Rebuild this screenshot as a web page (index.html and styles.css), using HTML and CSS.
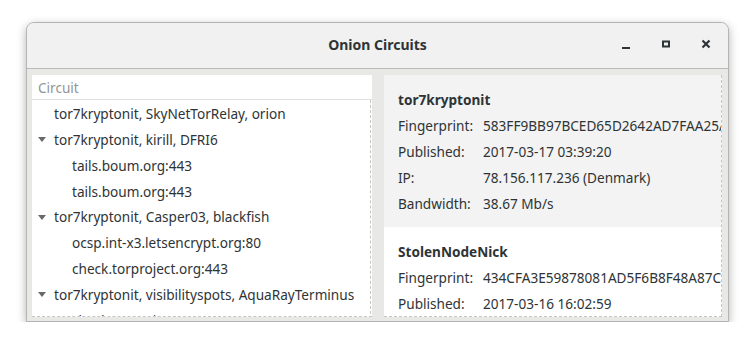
FILE: index.html
```html
<!DOCTYPE html>
<html lang="en">
<head>
  <meta charset="UTF-8">
  <title>Onion Circuits</title>
  <link rel="stylesheet" href="styles.css">
</head>
<body>
  <div class="janela">
    <header class="titulo">
      <span></span>
      <h1>Onion Circuits</h1>
      <div class="botoes">
        <button class="btn" title="Minimizar">
          <svg width="16" height="16" viewBox="0 0 16 16"><rect x="4" y="10" width="8" height="2" fill="#2e3436"/></svg>
        </button>
        <button class="btn" title="Maximizar">
          <svg width="16" height="16" viewBox="0 0 16 16"><rect x="5" y="4.5" width="6" height="5" fill="none" stroke="#2e3436" stroke-width="2"/></svg>
        </button>
        <button class="btn" title="Fechar">
          <svg width="16" height="16" viewBox="0 0 16 16"><path d="M4.5 3.5 L11.5 10.5 M11.5 3.5 L4.5 10.5" stroke="#2e3436" stroke-width="2.2" fill="none"/></svg>
        </button>
      </div>
    </header>

    <div class="conteudo">
      <section class="painel circuitos">
        <div class="cabecalho">Circuit</div>
        <ul class="arvore">
          <li class="linha">tor7kryptonit, SkyNetTorRelay, orion</li>
          <li class="linha aberto"><span class="seta"></span>tor7kryptonit, kirill, DFRI6</li>
          <li class="linha filho">tails.boum.org:443</li>
          <li class="linha filho">tails.boum.org:443</li>
          <li class="linha aberto"><span class="seta"></span>tor7kryptonit, Casper03, blackfish</li>
          <li class="linha filho">ocsp.int-x3.letsencrypt.org:80</li>
          <li class="linha filho">check.torproject.org:443</li>
          <li class="linha aberto"><span class="seta"></span>tor7kryptonit, visibilityspots, AquaRayTerminus</li>
          <li class="linha filho">check.torproject.org:443</li>
        </ul>
      </section>

      <section class="painel detalhes">
        <div class="no selecionado">
          <h2>tor7kryptonit</h2>
          <dl>
            <dt>Fingerprint:</dt><dd>583FF9BB97BCED65D2642AD7FAA25A1F3E5C8D02</dd>
            <dt>Published:</dt><dd>2017-03-17 03:39:20</dd>
            <dt>IP:</dt><dd>78.156.117.236 (Denmark)</dd>
            <dt>Bandwidth:</dt><dd>38.67 Mb/s</dd>
          </dl>
        </div>
        <div class="no">
          <h2>StolenNodeNick</h2>
          <dl>
            <dt>Fingerprint:</dt><dd>434CFA3E59878081AD5F6B8F48A87C2D91B0E6F3</dd>
            <dt>Published:</dt><dd>2017-03-16 16:02:59</dd>
          </dl>
        </div>
      </section>
    </div>
  </div>
</body>
</html>
```

FILE: styles.css
```css
body {
  margin: 0;
  background: #ffffff;
  font-family: "Noto Sans", "DejaVu Sans", sans-serif;
  font-size: 13.6px;
  color: #2e3436;
}
.janela {
  margin: 22px 0 0 26px;
  width: 701px;
  height: 298px;
  border: 1px solid #b4b4b2;
  border-radius: 8px 8px 0 0;
  background: #e8e8e7;
  box-shadow: 0 3px 10px rgba(0, 0, 0, 0.3);
  display: flex;
  flex-direction: column;
  overflow: hidden;
}
.titulo {
  height: 46px;
  padding-bottom: 2px;
  box-sizing: border-box;
  background: #f1f1f1;
  border-bottom: 1px solid #b9b9b7;
  display: grid;
  grid-template-columns: 1fr auto 1fr;
  align-items: center;
}
.titulo h1 {
  margin: 0;
  font-size: 14px;
  font-weight: bold;
  color: #2e3436;
}
.botoes {
  display: flex;
  justify-content: flex-end;
  padding-right: 2px;
}
.btn {
  width: 40px;
  height: 32px;
  padding: 0;
  border: none;
  background: none;
  display: flex;
  align-items: center;
  justify-content: center;
}
.conteudo {
  flex: 1;
  display: flex;
  gap: 12px;
  padding: 6px 6px 4px 5px;
  min-height: 0;
}
.painel {
  position: relative;
  background: #ffffff;
  overflow: hidden;
  border-bottom: 1px dashed #c6c6c6;
}
.circuitos {
  width: 340px;
}
.detalhes {
  flex: 1;
  border-right: 1px dashed #c6c6c6;
}
.cabecalho {
  height: 24px;
  line-height: 25px;
  padding-left: 6px;
  color: #929595;
  border-bottom: 1px solid #e0e0e0;
}
.arvore {
  list-style: none;
  margin: 0;
  padding: 1px 0 0;
  border-right: 1px dashed #c6c6c6;
  margin-right: 1px;
}
.linha {
  height: 25.85px;
  line-height: 25.85px;
  padding-left: 22px;
  white-space: nowrap;
  display: flex;
  align-items: center;
}
.linha.aberto {
  padding-left: 6px;
}
.filho {
  padding-left: 40px;
}
.seta {
  width: 0;
  height: 0;
  border-left: 4px solid transparent;
  border-right: 4px solid transparent;
  border-top: 5px solid #666a6b;
  margin-right: 8px;
}
.no {
  padding: 12px 0 10px 14px;
}
.no.selecionado {
  background: #f3f3f3;
}
.no h2 {
  margin: 0;
  height: 26px;
  line-height: 26px;
  font-size: 13.6px;
  font-weight: bold;
}
.no dl {
  margin: 0;
  display: grid;
  grid-template-columns: 85px auto;
}
.no dt, .no dd {
  margin: 0;
  height: 26px;
  line-height: 26px;
  white-space: nowrap;
}
```
